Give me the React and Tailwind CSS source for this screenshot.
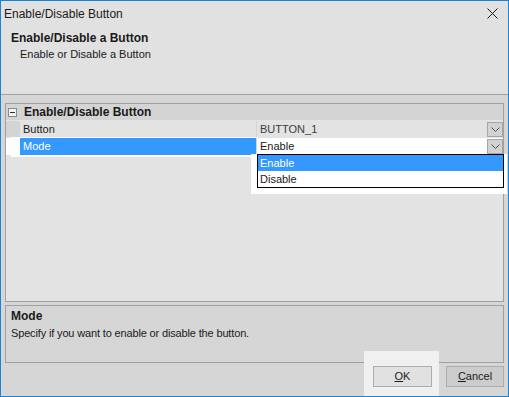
import React from "react";

const Chevron = () => (
	<svg width="9" height="5" viewBox="0 0 9 5" className="block">
		<polyline points="0.5,0.5 4.5,4.5 8.5,0.5" fill="none" stroke="#505050" strokeWidth="1" />
	</svg>
);

const DropButton = () => (
	<div className="w-[16px] h-[15px] border border-[#a6a6a6] bg-[#d2d2d2] flex items-center justify-center">
		<Chevron />
	</div>
);

const App = () => {
	return (
		<div className="w-[509px] h-[397px] border border-[#1883d7] bg-[#e1e1e1] flex flex-col text-[#1a1a1a] font-['Liberation_Sans',Arial,sans-serif] overflow-hidden">
			{/* title bar */}
			<div className="h-[25px] flex items-center justify-between pl-[3px] pr-[10px] shrink-0">
				<span className="text-[12px] leading-none">Enable/Disable Button</span>
				<svg width="11" height="11" viewBox="0 0 11 11">
					<path d="M0.5 0.5 L10.5 10.5 M10.5 0.5 L0.5 10.5" stroke="#1a1a1a" strokeWidth="1" />
				</svg>
			</div>

			{/* header */}
			<div className="h-[69px] shrink-0 border-b border-[#a0a0a0] pl-[10px] pt-[5px]">
				<div className="text-[12px] font-bold leading-[14px]">Enable/Disable a Button</div>
				<div className="text-[11px] leading-[14px] pl-[9px] mt-[2px]">Enable or Disable a Button</div>
			</div>

			{/* body */}
			<div className="flex-1 bg-[#d6d6d6] px-[4px] pt-[8px] flex flex-col relative">
				{/* property grid */}
				<div className="h-[199px] shrink-0 border border-[#a0a0a0] bg-[#e3e3e3] relative text-[11px]">
					{/* white frame of the edited row */}
					<div className="absolute left-[5px] top-[30px] w-[246px] h-[23px] bg-white" />

					<div className="h-[16px] bg-[#d4d4d4] flex items-center relative">
						<div className="w-[9px] h-[9px] ml-[2px] border border-[#8a8a8a] bg-[#f4f4f4] flex items-center justify-center">
							<div className="w-[5px] h-px bg-[#333]" />
						</div>
						<span className="ml-[7px] text-[12px] font-bold leading-none">Enable/Disable Button</span>
					</div>

					<div className="flex h-[16px] mt-px relative bg-[#d4d4d4]">
						<div className="w-[14px] shrink-0" />
						<div className="w-[236px] bg-[#e3e3e3] pl-[3px] flex items-center">Button</div>
						<div className="flex-1 ml-px bg-[#e3e3e3] flex items-center justify-between">
							<span className="pl-[3px] text-[#3c3c3c]">BUTTON_1</span>
							<DropButton />
						</div>
					</div>

					<div className="flex h-[17px] mt-px relative bg-[#d4d4d4]">
						<div className="w-[14px] shrink-0 bg-white" />
						<div className="w-[236px] bg-[#3399ff] text-white pl-[3px] flex items-center">Mode</div>
						<div className="flex-1 ml-px bg-white flex items-center justify-between">
							<span className="pl-[3px]">Enable</span>
							<DropButton />
						</div>
					</div>

					{/* open dropdown list */}
					<div className="absolute left-[245px] top-[50px] w-[256px] h-[40px] bg-white" />
					<div className="absolute left-[251px] top-[50px] w-[247px] h-[34px] border border-black bg-white flex flex-col">
						<div className="h-[16px] bg-[#3399ff] text-white pl-[2px] flex items-center">Enable</div>
						<div className="h-[16px] pl-[2px] flex items-center">Disable</div>
					</div>
				</div>

				{/* description */}
				<div className="h-[58px] mt-[3px] shrink-0 border border-[#a0a0a0] relative pl-[5px] pt-[3px] text-[11px]">
					<div className="font-bold text-[12px] leading-[14px]">Mode</div>
					<div className="leading-[14px] mt-[3px] tracking-[-0.15px]">Specify if you want to enable or disable the button.</div>
				</div>

				{/* OK focus glow */}
				<div className="absolute left-[363px] top-[256px] w-[75px] h-[46px] bg-[#f0f0f0]" />

				{/* buttons */}
				<div className="flex justify-end gap-[14px] mt-[3px] relative">
					<button className="w-[59px] h-[21px] border border-[#adadad] bg-[#e1e1e1] text-[11px] flex items-center justify-center">
						<u>O</u>K
					</button>
					<button className="w-[58px] h-[21px] border border-[#adadad] bg-[#cccccc] text-[11px] flex items-center justify-center">
						<u>C</u>ancel
					</button>
				</div>
			</div>
		</div>
	);
};

export default App;
